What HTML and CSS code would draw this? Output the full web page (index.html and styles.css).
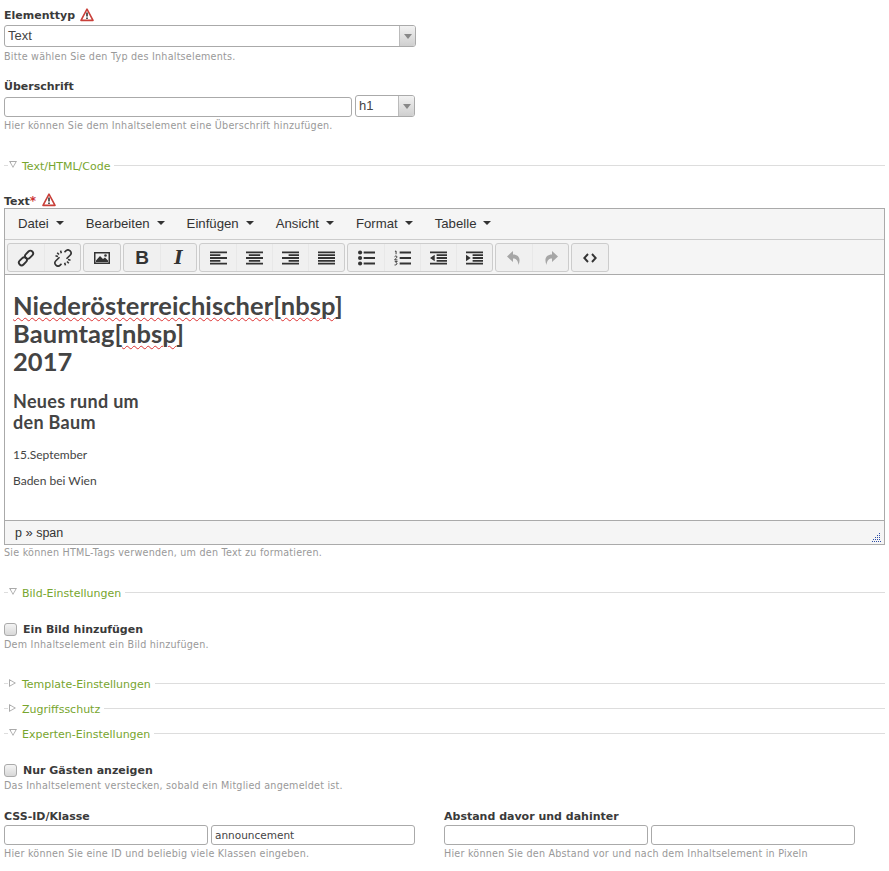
FILE: index.html
```html
<!DOCTYPE html>
<html lang="de">
<head>
<meta charset="utf-8">
<title>Inhaltselement</title>
<link rel="stylesheet" href="styles.css">
</head>
<body>
<svg class="defs" width="0" height="0" aria-hidden="true">
  <symbol id="warn" viewBox="0 0 14 14">
    <path d="M7 1.200 13 12.400H1Z" fill="#fff" stroke="#c9403a" stroke-width="1.600" stroke-linejoin="round"/>
    <path d="M7 4.600v4M7 9.600v1.400" stroke="#333" stroke-width="1.600" fill="none"/>
  </symbol>
  <symbol id="link" viewBox="0 0 18 18">
    <g fill="none" stroke="#333" stroke-width="1.900">
      <rect x="9.400" y="1.200" width="5.400" height="9" rx="2.700" transform="rotate(45 12.100 5.700)"/>
      <rect x="3.200" y="7.800" width="5.400" height="9" rx="2.700" transform="rotate(45 5.900 12.300)"/>
    </g>
  </symbol>
  <symbol id="unlink" viewBox="0 0 18 18">
    <g fill="none" stroke="#333" stroke-width="1.600">
      <path d="M10.500 3.200 11.800 1.900a3 3 0 0 1 4.300 4.300L14.800 7.500 12.500 9.800"/>
      <path d="M7.500 14.800 6.200 16.100a3 3 0 0 1-4.300-4.300L3.200 10.500 5.500 8.200"/>
      <path d="M5 5.500 3.200 3.700M7.300 4.200 6.600 1.600M4 7.500 1.500 6.800M13 12.500l1.800 1.800M10.700 13.800l.7 2.600M14 10.500l2.500.7"/>
    </g>
  </symbol>
  <symbol id="image" viewBox="0 0 18 18">
    <path fill="#333" d="M1 3h16v12H1Zm1.500 1.500v9h13v-9Z"/>
    <path fill="#333" d="M3 13v-1.500L7 7l3 3 2-1.500 3 3V13Z"/>
    <circle cx="12.500" cy="6.500" r="1.300" fill="#333"/>
  </symbol>
  <symbol id="al" viewBox="0 0 18 14">
    <path fill="#333" d="M0 0h18v2H0zM0 3h11v2H0zM0 6h18v2H0zM0 9h11v2H0zM0 12h18v2H0z"/>
  </symbol>
  <symbol id="ac" viewBox="0 0 18 14">
    <path fill="#333" d="M0 0h18v2H0zM3 3h12v2H3zM0 6h18v2H0zM3 9h12v2H3zM0 12h18v2H0z"/>
  </symbol>
  <symbol id="ar" viewBox="0 0 18 14">
    <path fill="#333" d="M0 0h18v2H0zM7 3h11v2H7zM0 6h18v2H0zM7 9h11v2H7zM0 12h18v2H0z"/>
  </symbol>
  <symbol id="aj" viewBox="0 0 18 14">
    <path fill="#333" d="M0 0h18v2H0zM0 3h18v2H0zM0 6h18v2H0zM0 9h18v2H0zM0 12h18v2H0z"/>
  </symbol>
  <symbol id="ul" viewBox="0 0 18 16">
    <circle cx="2.200" cy="2.200" r="2.200" fill="#333"/><circle cx="2.200" cy="8" r="2.200" fill="#333"/><circle cx="2.200" cy="13.800" r="2.200" fill="#333"/>
    <path fill="#333" d="M6 1.200h12v2H6zM6 7h12v2H6zM6 12.800h12v2H6z"/>
  </symbol>
  <symbol id="ol" viewBox="0 0 18 16">
    <path fill="none" stroke="#333" stroke-width="1" d="M1 1 2.200.6V4M.6 6.600C1 5.600 3.400 5.600 3.200 7 3 8 1 9 .6 10H3.600M.8 11.600H3.400L2 13c1.600 0 1.800 2.600-1.400 2.400"/>
    <path fill="#333" d="M6 1.200h12v2H6zM6 7h12v2H6zM6 12.800h12v2H6z"/>
  </symbol>
  <symbol id="outdent" viewBox="0 0 18 14">
    <path fill="#333" d="M0 0h18v2H0zM7 3h11v2H7zM7 6h11v2H7zM7 9h11v2H7zM0 12h18v2H0zM5 3.500v7L0 7z"/>
  </symbol>
  <symbol id="indent" viewBox="0 0 18 14">
    <path fill="#333" d="M0 0h18v2H0zM7 3h11v2H7zM7 6h11v2H7zM7 9h11v2H7zM0 12h18v2H0zM0 3.500v7L5 7z"/>
  </symbol>
  <symbol id="undo" viewBox="0 0 16 16">
    <path fill="#a6a6a6" d="M7 1 1 6.500 7 12V8.500c3 0 5 1.500 5.500 6.500C15 9 13 4.500 7 4.500Z"/>
  </symbol>
  <symbol id="redo" viewBox="0 0 16 16">
    <path fill="#a6a6a6" d="M9 1 15 6.500 9 12V8.500c-3 0-5 1.500-5.500 6.500C1 9 3 4.500 9 4.500Z"/>
  </symbol>
  <symbol id="code" viewBox="0 0 14 10">
    <path fill="none" stroke="#333" stroke-width="1.900" d="M5 1 1.300 5 5 9M9 1l3.700 4L9 9"/>
  </symbol>
</svg>

<main class="page">
  <div class="widget w-type">
    <h3 class="label"><span>Elementtyp</span><svg class="warn"><use href="#warn"/></svg></h3>
    <div class="select select-full"><span class="select-value">Text</span><span class="select-arrow"></span></div>
    <p class="help">Bitte wählen Sie den Typ des Inhaltselements.</p>
  </div>

  <div class="widget w-headline">
    <h3 class="label"><span>Überschrift</span></h3>
    <div class="headline-row">
      <div class="input input-headline"></div>
      <div class="select select-unit"><span class="select-value">h1</span><span class="select-arrow"></span></div>
    </div>
    <p class="help help-tight">Hier können Sie dem Inhaltselement eine Überschrift hinzufügen.</p>
  </div>

  <div class="legend l-text"><span class="dash"></span><span class="tri tri-open"></span><span class="legend-text">Text/HTML/Code</span><span class="legend-line"></span></div>

  <div class="widget w-text">
    <h3 class="label"><span>Text<span class="req">*</span></span><svg class="warn"><use href="#warn"/></svg></h3>
    <div class="editor">
      <div class="menubar">
        <span class="menu">Datei<i class="caret"></i></span>
        <span class="menu">Bearbeiten<i class="caret"></i></span>
        <span class="menu">Einfügen<i class="caret"></i></span>
        <span class="menu">Ansicht<i class="caret"></i></span>
        <span class="menu">Format<i class="caret"></i></span>
        <span class="menu">Tabelle<i class="caret"></i></span>
      </div>
      <div class="toolbar">
        <div class="group">
          <span class="btn"><svg class="ic18"><use href="#link"/></svg></span>
          <span class="btn"><svg class="ic18"><use href="#unlink"/></svg></span>
        </div>
        <div class="group">
          <span class="btn"><svg class="ic18"><use href="#image"/></svg></span>
        </div>
        <div class="group">
          <span class="btn glyph-b">B</span>
          <span class="btn glyph-i">I</span>
        </div>
        <div class="group">
          <span class="btn"><svg class="ic-al"><use href="#al"/></svg></span>
          <span class="btn"><svg class="ic-al"><use href="#ac"/></svg></span>
          <span class="btn"><svg class="ic-al"><use href="#ar"/></svg></span>
          <span class="btn"><svg class="ic-al"><use href="#aj"/></svg></span>
        </div>
        <div class="group">
          <span class="btn"><svg class="ic-li"><use href="#ul"/></svg></span>
          <span class="btn"><svg class="ic-li"><use href="#ol"/></svg></span>
          <span class="btn"><svg class="ic-al"><use href="#outdent"/></svg></span>
          <span class="btn"><svg class="ic-al"><use href="#indent"/></svg></span>
        </div>
        <div class="group">
          <span class="btn"><svg class="ic16"><use href="#undo"/></svg></span>
          <span class="btn"><svg class="ic16"><use href="#redo"/></svg></span>
        </div>
        <div class="group">
          <span class="btn"><svg class="ic-code"><use href="#code"/></svg></span>
        </div>
      </div>
      <div class="content">
        <h1 class="c-h1"><span class="sp">Niederösterreichischer</span>[<span class="sp">nbsp</span>]<br>Baumtag[<span class="sp">nbsp</span>]<br>2017</h1>
        <h2 class="c-h2">Neues rund um<br>den Baum</h2>
        <p class="c-p c-first">15.September</p>
        <p class="c-p">Baden bei Wien</p>
      </div>
      <div class="statusbar">
        <span class="path">p <span class="raquo">»</span> span</span>
        <svg class="grip" viewBox="0 0 9 9"><path fill="none" stroke="#2f4fa8" stroke-dasharray="1 1" d="M7 .5h2M5 2.500h4M3 4.500h6M1 6.500h8M0 8.500h9"/></svg>
      </div>
    </div>
    <p class="help help-editor">Sie können HTML-Tags verwenden, um den Text zu formatieren.</p>
  </div>

  <div class="legend l-image"><span class="dash"></span><span class="tri tri-open"></span><span class="legend-text">Bild-Einstellungen</span><span class="legend-line"></span></div>

  <div class="widget w-check1">
    <label class="check"><span class="box"></span><span class="check-text">Ein Bild hinzufügen</span></label>
    <p class="help help-check">Dem Inhaltselement ein Bild hinzufügen.</p>
  </div>

  <div class="legend l-tpl"><span class="dash"></span><span class="tri tri-closed"></span><span class="legend-text">Template-Einstellungen</span><span class="legend-line"></span></div>
  <div class="legend l-next"><span class="dash"></span><span class="tri tri-closed"></span><span class="legend-text">Zugriffsschutz</span><span class="legend-line"></span></div>
  <div class="legend l-next"><span class="dash"></span><span class="tri tri-open"></span><span class="legend-text">Experten-Einstellungen</span><span class="legend-line"></span></div>

  <div class="widget w-check2">
    <label class="check"><span class="box"></span><span class="check-text">Nur Gästen anzeigen</span></label>
    <p class="help help-check">Das Inhaltselement verstecken, sobald ein Mitglied angemeldet ist.</p>
  </div>

  <div class="two-col">
    <div class="col">
      <h3 class="label"><span>CSS-ID/Klasse</span></h3>
      <div class="pair"><div class="input input-half"></div><div class="input input-half">announcement</div></div>
      <p class="help help-tight">Hier können Sie eine ID und beliebig viele Klassen eingeben.</p>
    </div>
    <div class="col">
      <h3 class="label"><span>Abstand davor und dahinter</span></h3>
      <div class="pair"><div class="input input-half"></div><div class="input input-half"></div></div>
      <p class="help help-tight">Hier können Sie den Abstand vor und nach dem Inhaltselement in Pixeln</p>
    </div>
  </div>
</main>
</body>
</html>
```
FILE: styles.css
```css
* { box-sizing: border-box; }
html, body { margin: 0; padding: 0; }
body { background: #fff; color: #444; font-family: "DejaVu Sans", Verdana, sans-serif; font-size: 11px; }
.defs { position: absolute; }
.page { width: 889px; height: 871px; padding: 0 4px; overflow: hidden; }

.label { margin: 0; height: 16px; font-size: 11px; line-height: 16px; font-weight: bold; color: #3a3a3a; display: flex; align-items: center; gap: 5px; white-space: pre; }
.label > span { padding-top: 2px; }
.warn { width: 14px; height: 14px; }
.req { color: #c33; font-size: 12px; margin-right: 1px; }

.help { margin: 3px 0 0; height: 13px; font-size: 9.600px; line-height: 13px; color: #999; letter-spacing: 0.230px; white-space: nowrap; }
.help-tight { margin-top: 2px; }
.help-editor { margin-top: 1px; }
.help-check { margin-top: 2px; }

.w-type { padding-top: 7px; }
.w-headline { margin-top: 15px; }
.w-text { margin-top: 18px; }
.w-check1 { margin-top: 21px; }
.w-check2 { margin-top: 21px; }

.select { position: relative; height: 22px; border: 1px solid #aaa; border-radius: 3px; background: #fff; font-family: "Liberation Sans", Arial, sans-serif; font-size: 13px; line-height: 20px; color: #444; }
.select-full { width: 412px; margin-top: 2px; }
.select-unit { width: 60px; }
.select-value { padding-left: 3px; }
.select-arrow { position: absolute; top: 0; right: 0; bottom: 0; width: 16px; border-left: 1px solid #bbb; border-radius: 0 2px 2px 0; background: linear-gradient(#f2f2f2, #cfcfcf); }
.select-arrow::after { content: ""; position: absolute; left: 4px; top: 8px; border: 4px solid transparent; border-top: 5px solid #888; border-bottom: 0; }

.headline-row { display: flex; gap: 3px; align-items: flex-end; margin-top: 1px; }
.input { height: 20px; border: 1px solid #aaa; border-radius: 3px; background: #fff; font-size: 10.500px; line-height: 18px; padding-left: 3px; color: #444; overflow: hidden; }
.input-headline { width: 348px; }
.input-half { width: 204px; }

.legend { display: flex; align-items: center; height: 16px; }
.dash { width: 4px; height: 1px; margin-top: -2px; background: #ddd; }
.tri { width: 10px; height: 12px; margin-left: 1px; position: relative; flex: none; }
.tri-open::before { content: ""; position: absolute; left: 0; top: 1px; width: 8px; height: 7px; background: #aaa; clip-path: polygon(0 0, 100% 0, 50% 100%); }
.tri-open::after { content: ""; position: absolute; left: 1.500px; top: 2px; width: 5px; height: 4.400px; background: #fff; clip-path: polygon(0 0, 100% 0, 50% 100%); }
.tri-closed::before { content: ""; position: absolute; left: 0; top: 1px; width: 7px; height: 8px; background: #aaa; clip-path: polygon(0 0, 100% 50%, 0 100%); }
.tri-closed::after { content: ""; position: absolute; left: 1px; top: 2.500px; width: 4.400px; height: 5px; background: #fff; clip-path: polygon(0 0, 100% 50%, 0 100%); }
.legend-text { margin-left: 3px; padding-top: 2px; color: #77a52e; font-size: 11px; line-height: 16px; white-space: nowrap; }
.legend-line { flex: 1; height: 1px; margin-top: -2px; margin-left: 4px; background: #ddd; }
.l-text { margin-top: 26px; }
.l-image { margin-top: 26px; }
.l-tpl { margin-top: 25px; }
.l-next { margin-top: 9px; }

.editor { height: 337px; border: 1px solid #aaa; display: flex; flex-direction: column; font-family: "Liberation Sans", Arial, sans-serif; }
.menubar { height: 31px; padding: 0 0 2px 13px; background: #f5f5f5; border-bottom: 1px solid #ccc; display: flex; align-items: center; gap: 22px; font-size: 13.200px; color: #333; flex: none; }
.menu { display: inline-flex; align-items: center; }
.caret { width: 0; height: 0; margin-left: 7px; border: 4px solid transparent; border-top: 4px solid #333; border-bottom: 0; }
.toolbar { height: 35px; background: #f5f5f5; border-bottom: 1px solid #aaa; display: flex; gap: 2px; padding: 3px 0 0 2px; flex: none; }
.group { display: flex; height: 29px; border: 1px solid #ccc; border-radius: 3px; background: #f0f0f0; }
.btn { width: 36px; display: flex; align-items: center; justify-content: center; }
.btn + .btn { border-left: 1px solid #e8e8e8; }
.ic18 { width: 18px; height: 18px; }
.ic-al { width: 17px; height: 14px; }
.ic-li { width: 17px; height: 16px; }
.ic16 { width: 16px; height: 16px; }
.ic-code { width: 14px; height: 10px; }
.glyph-b { font-size: 19px; font-weight: bold; color: #333; }
.glyph-i { font-family: "DejaVu Serif", serif; font-style: italic; font-weight: bold; font-size: 18px; color: #333; }

.content { flex: 1; background: #fff; padding: 16px 0 0 8px; font-family: Lato, "DejaVu Sans", sans-serif; color: #444; overflow: hidden; }
.c-h1 { margin: 0; font-size: 25.500px; line-height: 28px; font-weight: 700; letter-spacing: 0.080px; }
.sp { text-decoration: underline wavy #d33; text-decoration-thickness: 1px; text-underline-offset: 2px; }
.c-h2 { margin: 16px 0 0; font-size: 18px; line-height: 21px; font-weight: 700; letter-spacing: 0.300px; }
.c-p { margin: 13px 0 0; font-size: 12px; line-height: 13px; }
.c-first { margin-top: 15px; }
.statusbar { height: 24px; background: #f5f5f5; border-top: 1px solid #aaa; padding-left: 10px; display: flex; align-items: center; justify-content: space-between; font-size: 12.500px; color: #333; flex: none; }
.raquo { font-size: 13px; }
.grip { width: 9px; height: 9px; margin: 9px 3px 0 0; }

.check { display: flex; align-items: center; height: 14px; }
.box { width: 13px; height: 13px; border: 1px solid #aaa; border-radius: 3px; background: linear-gradient(#f4f4f4, #d8d8d8); flex: none; }
.check-text { margin-left: 6px; font-size: 11px; font-weight: bold; color: #3a3a3a; white-space: nowrap; }

.two-col { display: flex; gap: 29px; margin-top: 16px; }
.col { width: 411px; flex: none; }
.pair { display: flex; gap: 3px; margin-top: 1px; }
```
